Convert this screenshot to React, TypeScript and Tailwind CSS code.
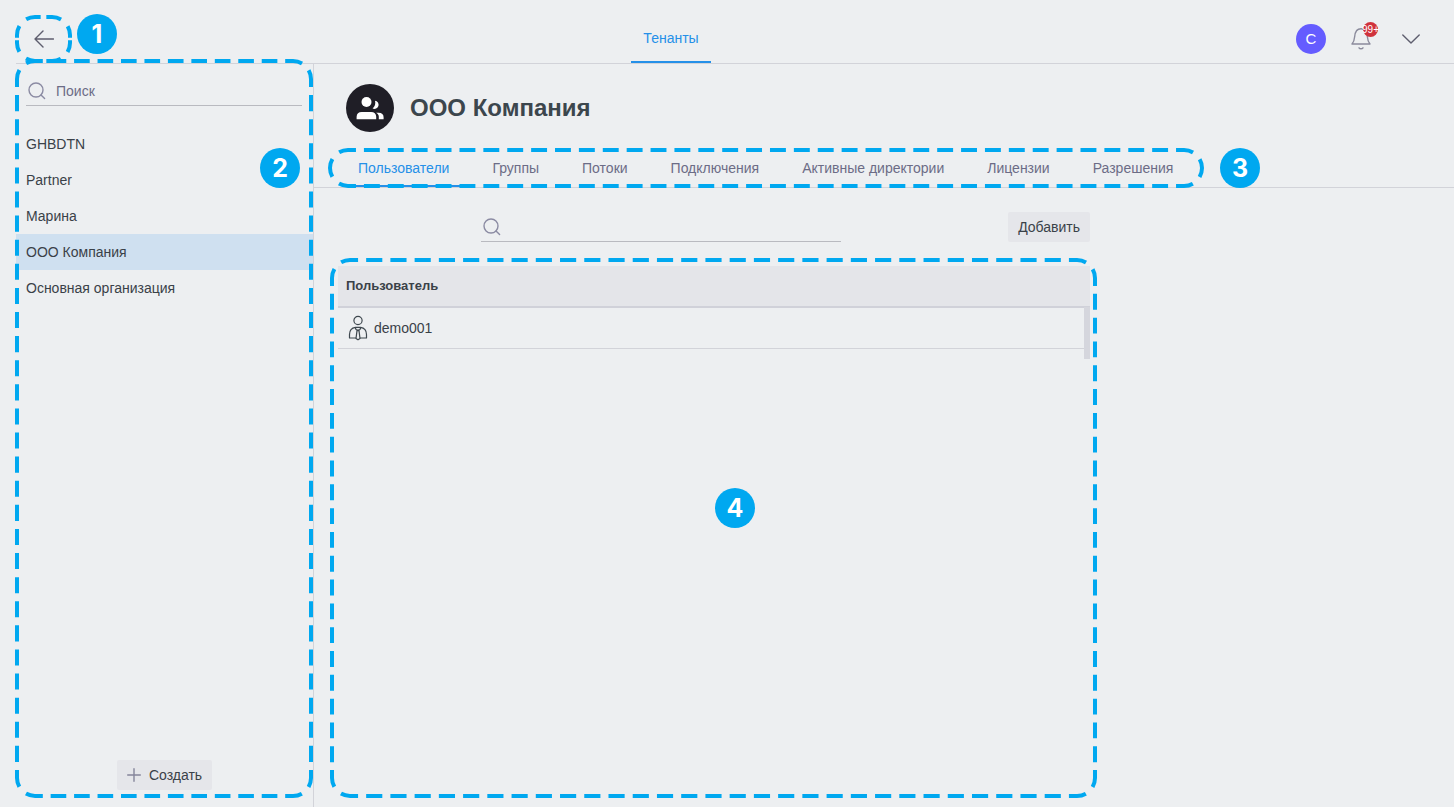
import { ReactNode, useLayoutEffect, useRef, useState } from "react";
import clsx from "clsx";

const tenants = ["GHBDTN", "Partner", "Марина", "ООО Компания", "Основная организация"];

const tabs = [
  "Пользователи",
  "Группы",
  "Потоки",
  "Подключения",
  "Активные директории",
  "Лицензии",
  "Разрешения",
];

const users = ["demo001"];

const DASH = 16;
const GAP = 8;
const RADIUS = 18;
const STROKE = 4;

type Segment = { d: string; length: number };

// Sides and corners are separate segments, so that dashes stay symmetrical.
function frameSegments(width: number, height: number): Segment[] {
  const a = STROKE / 2;
  const r = RADIUS;
  const right = width - a;
  const bottom = height - a;
  const h = width - STROKE - 2 * r;
  const v = height - STROKE - 2 * r;
  const arc = (Math.PI * r) / 2;

  return [
    { d: `M${a + r} ${a}H${right - r}`, length: h },
    { d: `M${right - r} ${a}A${r} ${r} 0 0 1 ${right} ${a + r}`, length: arc },
    { d: `M${right} ${a + r}V${bottom - r}`, length: v },
    { d: `M${right} ${bottom - r}A${r} ${r} 0 0 1 ${right - r} ${bottom}`, length: arc },
    { d: `M${right - r} ${bottom}H${a + r}`, length: h },
    { d: `M${a + r} ${bottom}A${r} ${r} 0 0 1 ${a} ${bottom - r}`, length: arc },
    { d: `M${a} ${bottom - r}V${a + r}`, length: v },
    { d: `M${a} ${a + r}A${r} ${r} 0 0 1 ${a + r} ${a}`, length: arc },
  ].filter((segment) => segment.length > 0);
}

function DashedFrame({ className }: { className: string }) {
  const ref = useRef<HTMLDivElement>(null);
  const [size, setSize] = useState({ width: 0, height: 0 });

  useLayoutEffect(() => {
    const node = ref.current;
    if (!node) {
      return;
    }

    const measure = () => setSize({ width: node.offsetWidth, height: node.offsetHeight });
    measure();

    const observer = new ResizeObserver(measure);
    observer.observe(node);
    return () => observer.disconnect();
  }, []);

  return (
    <div ref={ref} aria-hidden="true" className={clsx("pointer-events-none absolute z-10", className)}>
      <svg className="block h-full w-full overflow-visible" fill="none" stroke="#00a8f0" strokeWidth={STROKE}>
        {size.width > 0 &&
          frameSegments(size.width, size.height).map(({ d, length }) => {
            const count = Math.max(1, Math.round(length / (DASH + GAP)));
            const scale = length / count / (DASH + GAP);
            return (
              <path
                key={d}
                d={d}
                strokeDasharray={`${DASH * scale} ${GAP * scale}`}
                strokeDashoffset={(DASH * scale) / 2}
              />
            );
          })}
      </svg>
    </div>
  );
}

function Marker({ className, children }: { className: string; children: ReactNode }) {
  return (
    <span
      className={clsx(
        "pointer-events-none absolute z-20 grid size-10 place-items-center rounded-full bg-[#00a8f0] font-[Inter,sans-serif] text-[25px] leading-none font-bold text-white",
        className
      )}
    >
      {children}
    </span>
  );
}

function SearchIcon() {
  return (
    <svg viewBox="0 0 18 18" className="size-[18px] shrink-0" fill="none" stroke="#8b8ba3" strokeWidth="1.4">
      <circle cx="8" cy="8" r="7" />
      <path d="M13 13l3.600 3.600" strokeLinecap="round" />
    </svg>
  );
}

function BackIcon() {
  return (
    <svg viewBox="0 0 20 18" className="h-[18px] w-5" fill="none" stroke="#5e5e6e" strokeWidth="1.4" strokeLinecap="round" strokeLinejoin="round">
      <path d="M9 1L1 9l8 8M1 9h18.500" />
    </svg>
  );
}

function BellIcon() {
  return (
    <svg viewBox="0 0 20 24" className="h-6 w-5" fill="none" stroke="#8b8b9c" strokeWidth="1.4" strokeLinecap="round" strokeLinejoin="round">
      <path d="M1 17h18c-1.800-2-2.400-4-2.700-7.500C15.900 4.500 14 1.700 10 1.700S4.100 4.500 3.700 9.500C3.400 13 2.800 15 1 17z" />
      <path d="M8 20.800c.8 1.300 3.200 1.300 4 0" />
    </svg>
  );
}

function ChevronIcon() {
  return (
    <svg viewBox="0 0 18 10" className="h-2.5 w-[18px]" fill="none" stroke="#5e5e6e" strokeWidth="1.4" strokeLinecap="round" strokeLinejoin="round">
      <path d="M.8 1L9 9l8.200-8" />
    </svg>
  );
}

function PlusIcon() {
  return (
    <svg viewBox="0 0 14 14" className="size-3.5" fill="none" stroke="#85859b" strokeWidth="1.4" strokeLinecap="round">
      <path d="M7 .7v12.600M.7 7h12.600" />
    </svg>
  );
}

function PeopleIcon() {
  return (
    <svg viewBox="0 0 28 24" className="h-6 w-7" fill="#fff">
      <circle cx="10.500" cy="6" r="5" />
      <path d="M.6 23.200v-2.400c0-3.200 2-4.800 5-4.800h9.600c3 0 5 1.600 5 4.800v2.400z" />
      <path d="M19 4.700a4.100 4.100 0 1 1-2.400 7.700c2.400-2 3.200-4.900 2.400-7.700z" />
      <path d="M20 16.800h2.600c3.200 0 5 1.600 5 4.400v2h-4.800v-2.400c0-1.600-.9-3-2.800-4z" />
    </svg>
  );
}

function UserIcon() {
  return (
    <svg viewBox="0 0 20 26" className="h-[26px] w-5" fill="none" stroke="#3f484f" strokeWidth="1.2" strokeLinejoin="round">
      <circle cx="10" cy="5.500" r="4.100" />
      <path d="M8 23H1.500v-3.500c0-4 2.200-6.700 6-7.200h5c3.800.5 6 3.200 6 7.200V23H12" />
      <path d="M7.300 12.500c.2 1.700 1.200 2.700 2.700 2.700s2.500-1 2.700-2.700" />
      <path d="M9 15.600h2l1 7.900-2 1.300-2-1.300z" />
    </svg>
  );
}

function Header() {
  return (
    <header className="relative ml-4 flex h-16 items-center justify-between border-b border-[#d2d3d9] pr-[34px]">
      <button type="button" aria-label="Назад" className="pt-3.5 pl-[18px]">
        <BackIcon />
      </button>

      <nav className="self-stretch">
        <a
          href="#tenants"
          className="flex h-[63px] items-center border-b-2 border-[#2590e8] px-3 pt-3.5 text-[#2590e8]"
        >
          Тенанты
        </a>
      </nav>

      <div className="flex items-center pt-3.5 pl-2">
        <span className="grid size-[30px] place-items-center rounded-full bg-[#655cff] text-[15px] leading-none text-white">
          С
        </span>
        <button type="button" aria-label="Уведомления" className="relative ml-[25px]">
          <BellIcon />
          <span className="absolute -top-[5px] left-3 flex size-[15px] items-center justify-center rounded-full bg-[#d0323c] pt-px text-[10px] leading-none text-white">
            99+
          </span>
        </button>
        <button type="button" aria-label="Меню" className="ml-[31px]">
          <ChevronIcon />
        </button>
      </div>

      <DashedFrame className="top-[15px] -left-px h-12 w-[57px]" />
      <Marker className="top-3.5 left-[61px]">1</Marker>
    </header>
  );
}

function Sidebar() {
  return (
    <aside className="relative flex w-[314px] shrink-0 flex-col border-r border-[#d2d3d9] pb-[17px] pl-4">
      <label className="mr-[11px] ml-2.5 flex h-[42px] items-center border-b border-[#b9bac0] pt-3">
        <span className="pl-0.5">
          <SearchIcon />
        </span>
        <input
          type="text"
          aria-label="Поиск"
          placeholder="Поиск"
          className="ml-2.5 w-full min-w-0 bg-transparent outline-none placeholder:text-[#6c6c86]"
        />
      </label>

      <ul className="mt-5">
        {tenants.map((name) => (
          <li key={name}>
            <button
              type="button"
              className={clsx(
                "flex h-9 w-full items-center px-2.5 text-left",
                name === "ООО Компания" && "bg-[#cfe0f0]"
              )}
            >
              {name}
            </button>
          </li>
        ))}
      </ul>

      <button
        type="button"
        className="mt-auto flex h-[30px] items-center gap-2 self-center rounded-xs bg-[#e5e6ea] px-2.5"
      >
        <PlusIcon />
        Создать
      </button>

      <DashedFrame className="-top-[5px] right-0 bottom-[9px] left-[15px]" />
      <Marker className="top-[84px] right-[13px]">2</Marker>
    </aside>
  );
}

function UsersPanel() {
  return (
    <section className="relative w-full max-w-[776px] grow pt-6 pl-6">
      <div className="flex items-center">
        <label className="mx-auto flex h-[30px] w-[360px] items-center border-b border-[#b9bac0] pl-0.5">
          <SearchIcon />
          <input type="text" aria-label="Поиск пользователей" className="ml-2 w-full min-w-0 bg-transparent outline-none" />
        </label>
        <button type="button" className="ml-6 h-[30px] rounded-xs bg-[#e5e6ea] px-2.5">
          Добавить
        </button>
      </div>

      <div className="relative mt-6">
        <table className="w-full border-collapse text-left">
          <thead>
            <tr className="h-[41px] border-b-2 border-[#d0d1d9] bg-[#e4e5e9]">
              <th className="px-2 text-[13px] font-bold">Пользователь</th>
            </tr>
          </thead>
          <tbody>
            {users.map((user) => (
              <tr key={user} className="h-[41px] border-b border-[#d2d3d9]">
                <td className="px-2.5">
                  <span className="flex items-center gap-1.5">
                    <UserIcon />
                    {user}
                  </span>
                </td>
              </tr>
            ))}
          </tbody>
        </table>
        <div className="absolute top-[41px] right-0 h-[52px] w-1.5 bg-[#d5d6dd]" />
      </div>

      <DashedFrame className="top-[70px] -right-[7px] bottom-[9px] left-4" />
      <Marker className="top-[300px] left-[401px]">4</Marker>
    </section>
  );
}

export default function App() {
  return (
    <div className="flex min-h-screen flex-col bg-[#edeff1] font-['Liberation_Sans',Arial,sans-serif] text-sm text-[#3a4148]">
      <Header />
      <div className="flex grow">
        <Sidebar />

        <main className="flex min-w-0 grow flex-col">
          <div className="flex items-center gap-4 pt-5 pl-8">
            <span className="grid size-12 place-items-center rounded-full bg-[#1f1e26]">
              <PeopleIcon />
            </span>
            <h1 className="text-2xl font-bold text-[#3c464d]">ООО Компания</h1>
          </div>

          <div className="relative mt-4 border-b border-[#d2d3d9] pl-8">
            <nav className="flex gap-[19px]">
              {tabs.map((tab, index) => (
                <a
                  key={tab}
                  href={`#tab-${index}`}
                  className={clsx(
                    "flex h-[39px] items-center border-b-2 px-3 pt-0.5 whitespace-nowrap",
                    index === 0 ? "border-[#2590e8] text-[#2590e8]" : "border-transparent text-[#6c6c86]"
                  )}
                >
                  {tab}
                </a>
              ))}
            </nav>
            <DashedFrame className="-bottom-px left-3.5 h-10 w-[876px]" />
            <Marker className="-bottom-px left-[906px]">3</Marker>
          </div>

          <UsersPanel />
        </main>
      </div>
    </div>
  );
}
